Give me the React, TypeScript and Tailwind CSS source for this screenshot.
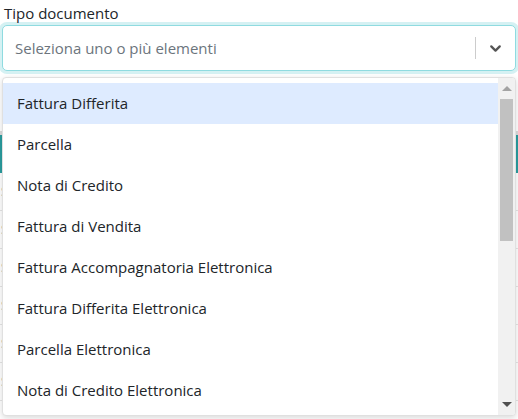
import { ChevronDown } from "lucide-react";

const OPTIONS = [
  "Fattura Differita",
  "Parcella",
  "Nota di Credito",
  "Fattura di Vendita",
  "Fattura Accompagnatoria Elettronica",
  "Fattura Differita Elettronica",
  "Parcella Elettronica",
  "Nota di Credito Elettronica",
] as const;

const BG_ROWS = ["r1", "r2", "r3", "r4", "r5", "r6"] as const;

export default function App() {
  return (
    <div
      className="relative h-[419px] w-[518px] overflow-hidden bg-white text-[#212529]"
      style={{ fontFamily: '"Open Sans", "Noto Sans", sans-serif' }}
    >
      <div className="px-[2px] pt-[3px]">
        <label className="block pl-[2px] text-[15px] leading-[20px] text-[#212529]">
          Tipo documento
        </label>
        <div className="mt-[2px] flex h-[46px] items-center rounded-[5px] border border-[#8fdbe0] bg-white shadow-[0_0_0_3px_#d5f1f3]">
          <div className="flex-1 pl-[12px] text-[15px] text-[#6c757d]">
            Seleziona uno o più elementi
          </div>
          <div className="h-[22px] w-px bg-[#cccccc]" />
          <div className="flex w-[39px] justify-center text-[#555]">
            <ChevronDown size={17} strokeWidth={3.2} />
          </div>
        </div>
      </div>

      {/* page content behind the open menu */}
      <div className="mt-[8px]">
        <div className="h-[52px]" />
        <div className="h-[4px] bg-[#dcdcdc]" />
        <div className="h-[38px] bg-[#2a9d9f]" />
        {BG_ROWS.map((row) => (
          <div className="h-[38px] border-b border-[#e5e5e5] pl-[1px] pt-[10px] text-[12px] text-[#2a9d9f]" key={row}>
            S
          </div>
        ))}
      </div>

      <div className="absolute left-[2px] top-[77px] flex h-[339px] w-[514px] overflow-hidden rounded-[4px] border border-[#e0e0e0] bg-white shadow-[0_2px_6px_rgba(0,0,0,0.15)]">
        <div className="flex-1 pt-[5px]">
          {OPTIONS.map((opt, i) => (
            <div
              className={
                i === 0
                  ? "flex h-[41px] items-center bg-[#deebff] pl-[14px] text-[15px]"
                  : "flex h-[41px] items-center pl-[14px] text-[15px]"
              }
              key={opt}
            >
              {opt}
            </div>
          ))}
        </div>
        <div className="flex w-[17px] flex-col items-center bg-[#f1f1f1]">
          <div className="flex h-[21px] items-center justify-center">
            <div className="h-0 w-0 border-x-[5px] border-b-[5px] border-x-transparent border-b-[#a3a3a3]" />
          </div>
          <div className="h-[142px] w-[13px] bg-[#c1c1c1]" />
          <div className="flex-1" />
          <div className="flex h-[21px] items-center justify-center">
            <div className="h-0 w-0 border-x-[5px] border-t-[5px] border-x-transparent border-t-[#505050]" />
          </div>
        </div>
      </div>
    </div>
  );
}
